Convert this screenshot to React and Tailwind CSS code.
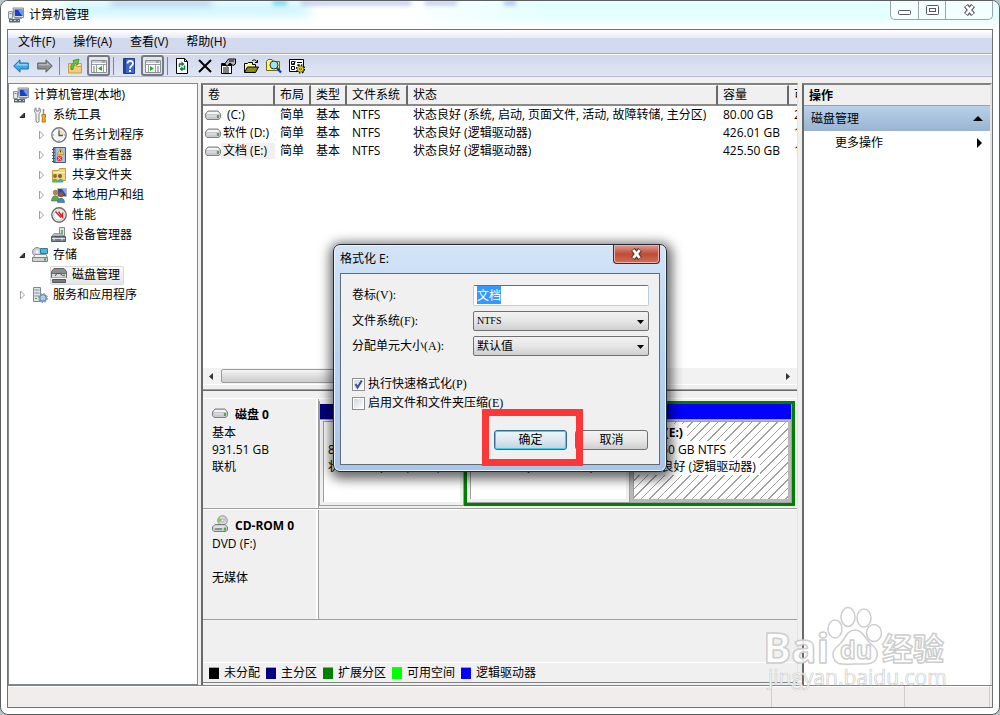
import { useEffect, useRef } from 'react'

const ui = "font-['Open_Sans','Noto_Sans_CJK_SC',sans-serif]"
const song = "font-['Liberation_Serif','Noto_Sans_CJK_SC',serif]"

function Icon({ children, size = 16, className = '' }) {
  return (
    <svg width={size} height={size} viewBox="0 0 16 16" className={`shrink-0 ${className}`} aria-hidden="true">
      {children}
    </svg>
  )
}

const ComputerIcon = () => (
  <Icon>
    <path d="M5 1h10.5v9.5H6z" fill="#d8dadd" stroke="#8b9097" />
    <path d="M6.5 2.5h8v6.5H7z" fill="#1b3fc4" />
    <path d="M10 2.5h4.5V9L12 6z" fill="#6d9cf4" />
    <path d="M.5 4.5h4v7h-4z" fill="#e3e7ea" stroke="#8e969c" />
    <path d="M1.5 6.5h2" stroke="#3bb04a" />
    <path d="M7 11h7v1H6z" fill="#9ba3aa" />
    <path d="M1 12h11v3.5H1z" fill="#5d6b75" />
    <path d="M2 13.5h2m2 0h2m2 0h1" stroke="#c8d4dc" />
  </Icon>
)

const ToolsIcon = () => (
  <Icon>
    <path d="M4 .8C2 1.500 1.500 5 4 6.500V14c0 2 3 2 3 0V6.500c2.500-1.500 2-5 0-5.700V4H4z" fill="#eef0f1" stroke="#7d8489" />
    <path d="M11.500 2v6" stroke="#8a9196" strokeWidth="1.500" />
    <path d="M10 7.500h3.500v2.500l-.5 1 .5 4h-3.500l.5-4-.5-1z" fill="#f3b02a" stroke="#b9780e" />
  </Icon>
)

const ClockIcon = () => (
  <Icon>
    <circle cx="8" cy="8" r="7.2" fill="#f4f4f2" stroke="#777b80" strokeWidth="1.4" />
    <path d="M8 8V2.500A5.500 5.500 0 0 1 13.500 8z" fill="#f7dfae" />
    <path d="M8 3.500V8.500h4" stroke="#4a5c70" strokeWidth="1.3" fill="none" />
    <path d="M8 2v1M8 13v1M2 8h1M13 8h1" stroke="#888" />
  </Icon>
)

const EventIcon = () => (
  <Icon>
    <path d="M2.500.5h12v15h-12z" fill="#7893c0" stroke="#40598a" />
    <path d="M5 1h9v14H5z" fill="#a9c0e6" />
    <path d="M1 2.500h3m-3 3h3m-3 3h3m-3 3h3m-3 3h3" stroke="#445a84" />
    <path d="M9.500 1.500l3.500 6H6z" fill="#ffd633" stroke="#b58b12" strokeWidth=".7" />
    <path d="M9.500 3.500v2" stroke="#333" />
    <circle cx="8.500" cy="11.500" r="2.800" fill="#dd3b3b" />
    <path d="M7.300 10.300l2.400 2.400m0-2.400l-2.400 2.400" stroke="#fff" />
  </Icon>
)

const SharedIcon = () => (
  <Icon>
    <path d="M1.500 3.500h6l1-2h6v12h-13z" fill="#f5d675" stroke="#c49b34" />
    <path d="M2 5.500h12" stroke="#fff0b4" />
    <circle cx="4" cy="9" r="2" fill="#8a6b3a" />
    <circle cx="9" cy="9" r="2" fill="#7c5b31" />
    <path d="M1 15.500c0-5 6-5 6 0z" fill="#6ab04c" />
    <path d="M6.500 15.500c0-5 6-5 6 0z" fill="#4aa6b8" />
  </Icon>
)

const UsersIcon = () => (
  <Icon>
    <path d="M6.500 1.500h9v8h-9z" fill="#2647bd" stroke="#b5bac1" />
    <path d="M11 2h4v6z" fill="#84a8ef" />
    <circle cx="4.500" cy="5.500" r="2.700" fill="#b98447" />
    <circle cx="10" cy="7.500" r="2.600" fill="#8d5c2c" />
    <path d="M.5 14c0-7 7.500-7 7.500 0z" fill="#5da563" stroke="#3d7745" strokeWidth=".6" />
    <path d="M6.500 15.500c0-6 7-6 7 0z" fill="#4f86b9" stroke="#335d8c" strokeWidth=".6" />
  </Icon>
)

const GaugeIcon = () => (
  <Icon>
    <circle cx="8" cy="8" r="7.200" fill="#fbfbfb" stroke="#6c6c6c" strokeWidth="1.400" />
    <circle cx="8" cy="8" r="5.300" fill="none" stroke="#c9c9c9" />
    <path d="M4.500 4.500l5.500 6M7.500 4.500l4 5.500V5.500" fill="none" stroke="#cf1f1f" strokeWidth="1.400" />
  </Icon>
)

const DeviceIcon = () => (
  <Icon>
    <path d="M8.500.5h5v9h-5z" fill="#dfe5e8" stroke="#848c92" />
    <path d="M11 3v4" stroke="#43a047" strokeWidth="1.500" />
    <path d="M3 6.500h7L13 9H1z" fill="#b9c0c5" stroke="#7b848a" strokeWidth=".7" />
    <path d="M.5 9.500h14v5H.5z" fill="#72808a" stroke="#505b63" />
    <path d="M1 11.500h13" stroke="#dbe2e6" />
    <path d="M3 10.500v3m8-3v3" stroke="#e8eef1" />
  </Icon>
)

const StorageIcon = () => (
  <Icon>
    <circle cx="5" cy="5" r="4.500" fill="#c9cfd2" stroke="#899196" />
    <circle cx="5" cy="5" r="1.400" fill="#fff" />
    <path d="M8.500 1.500h7v5h-7z" fill="#4bb7df" stroke="#2c7ea3" />
    <path d="M1.500 10.500L3 7.500h11l1.500 3z" fill="#eff1f2" stroke="#8d9498" />
    <path d="M.5 10.500h15v4H.5z" fill="#cfd3d6" stroke="#7c8387" />
    <path d="M12 12.500h2" stroke="#24b324" strokeWidth="2" />
  </Icon>
)

const DiskStackIcon = () => (
  <Icon>
    <path d="M.5 4.500L3 1.500h10l2.500 3v2H.5z" fill="#8b8f92" stroke="#5c6063" />
    <path d="M.5 6.500h15v4H.5z" fill="#d9dbdc" stroke="#66696b" />
    <path d="M4.500 9c0-3.500 6-3.500 7 0" stroke="#4f5254" fill="none" />
    <path d="M12 8.500h2" stroke="#1fa81f" strokeWidth="1.500" />
    <path d="M1 10.500h14v2H1z" fill="#f4f4f4" />
    <path d="M1.500 12.500h13v3h-13z" fill="#777b7e" stroke="#55585a" />
  </Icon>
)

const ServicesIcon = () => (
  <Icon>
    <path d="M1.500.5h7v14h-7z" fill="#dce2e7" stroke="#7f8991" />
    <path d="M2.500 3h5m-5 3h5m-5 3h5" stroke="#7d96a8" />
    <path d="M3 11.500h2" stroke="#3aa843" />
    <circle cx="11" cy="11" r="3.200" fill="#cfe0ef" stroke="#6b91b4" strokeWidth="1.500" />
    <circle cx="11" cy="11" r="4.500" fill="none" stroke="#6b91b4" strokeDasharray="1.700 1.830" />
    <circle cx="11" cy="11" r="1.200" fill="#fff" stroke="#5d7f9f" strokeWidth=".6" />
  </Icon>
)

function DriveIcon() {
  return (
    <svg width="16" height="10" viewBox="0 0 16 10" className="shrink-0" aria-hidden="true">
      <path d="M.5 4L3 1h10l2.500 3v3.500L14 9.500H2L.5 7.500z" fill="#c7c9cb" stroke="#7e8083" />
      <path d="M1.500 4h13L13 2H3z" fill="#f3f4f4" />
      <path d="M2 6h9" stroke="#e8e8f2" />
      <path d="M13 5v3" stroke="#19a319" strokeWidth="1.500" />
    </svg>
  )
}

function CdIcon() {
  return (
    <svg width="16" height="17" viewBox="0 0 16 17" className="shrink-0" aria-hidden="true">
      <circle cx="10.500" cy="5.500" r="4.800" fill="#d5d8da" stroke="#8e9396" />
      <path d="M10.500 5.500L7 2.500a5 5 0 0 0-.5 5z" fill="#79d54a" />
      <path d="M10.500 5.500l3-4 1.500 4z" fill="#d8b3dc" />
      <circle cx="10.500" cy="5.500" r="1.300" fill="#fff" stroke="#888" strokeWidth=".6" />
      <path d="M.5 12L3 9.500h10l2.500 2.500v3L14 16.500H2L.5 15z" fill="#c9cbcd" stroke="#7a7d80" />
      <path d="M2 12h12" stroke="#f7f7f7" />
      <path d="M3 14h7" stroke="#55585a" />
      <path d="M13 12.500v3" stroke="#19a319" strokeWidth="1.500" />
    </svg>
  )
}

const BackIcon = () => (
  <Icon>
    <path d="M.7 8L7 1.800V5h8.300v6H7v3.200z" fill="#3ba9ea" stroke="#1f6fa8" />
    <path d="M2.500 7.500L6 4v2h8.500v1.500z" fill="#8fd6fa" />
  </Icon>
)
const ForwardIcon = () => (
  <Icon>
    <path d="M15.300 8L9 1.800V5H.7v6H9v3.200z" fill="#8a8c8e" stroke="#606264" />
    <path d="M13.500 7.500L10 4v2H1.500v1.500z" fill="#b5b7b9" />
  </Icon>
)
const UpFolderIcon = () => (
  <Icon>
    <path d="M1.500 5.500h4l1.500 2h7.500v7.500h-13z" fill="#f3cd7c" stroke="#c79c4a" />
    <path d="M9.500 5.500h5v3h-5z" fill="#f8dfa0" stroke="#c79c4a" />
    <path d="M4 11.500c-.5-4 .5-6 3-7L6 2.500l6-1.500-1.500 6-1.500-1.500c-2 .5-2.500 3-3 6z" fill="#5fca37" stroke="#338d1b" strokeWidth=".8" />
  </Icon>
)
const PaneIcon = ({ flip }) => (
  <Icon>
    <path d="M.5 2.500h15v12H.5z" fill="#fdfdfd" stroke="#8b8e91" />
    <path d="M1 3h14v2H1z" fill="#ccd0d4" />
    <path d="M11 4h3" stroke="#77797c" />
    <path d="M1 6.500h14" stroke="#999ca0" />
    {flip ? (
      <>
        <path d="M3.500 7v7M10.500 7v7" stroke="#9a9da0" />
        <path d="M5 8l4 2.500L5 13z" fill="#2fa52f" />
        <path d="M12 9h2m-2 2h2m-2 2h2" stroke="#6f7276" />
      </>
    ) : (
      <>
        <path d="M5.500 7v7M12.500 7v7" stroke="#9a9da0" />
        <path d="M2 9h2m-2 2h2m-2 2h2" stroke="#6f7276" />
        <path d="M11 8l-4 2.500L11 13z" fill="#2fa52f" />
      </>
    )}
  </Icon>
)
const HelpIcon = () => (
  <Icon>
    <path d="M2.500.5h11v15h-11z" fill="#3f68c4" stroke="#203e8c" />
    <path d="M3 1h2v14H3z" fill="#234497" />
    <path d="M6.500 5.500C6.500 2 12 2 12 5.500 12 8 9 7.500 9 10.500" stroke="#fff" strokeWidth="1.800" fill="none" />
    <path d="M8 12h2v2H8z" fill="#fff" />
  </Icon>
)
const RefreshIcon = () => (
  <Icon>
    <path d="M2.500.5h8l3 3v12h-11z" fill="#fff" stroke="#000" />
    <path d="M10.500.5v3h3" fill="none" stroke="#000" />
    <path d="M5.500 9V6H8M10.500 7.500v3.500H8" fill="none" stroke="#08803a" strokeWidth="1.500" />
    <path d="M7.500 3.500L10.500 6l-3 2.500zM8.500 8.500L5.500 11l3 2.500z" fill="#08803a" />
  </Icon>
)
const DeleteIcon = () => (
  <Icon>
    <path d="M2 2l12 12M14 2L2 14" stroke="#000" strokeWidth="2" />
  </Icon>
)
const PropsIcon = () => (
  <Icon>
    <path d="M1.500 5.500h10v10h-10z" fill="#fff" stroke="#000" />
    <path d="M2 6h9v2H2z" fill="#000" />
    <path d="M3 10h6M3 12h6M3 14h6" stroke="#000" />
    <path d="M5 5.500L8.500 1h7v5L13 7.500 10 5 7 8.500z" fill="#b5b5b5" stroke="#000" />
    <path d="M9 3h5" stroke="#000" />
  </Icon>
)
const OpenIcon = () => (
  <Icon>
    <path d="M1.500 14V5.500h3l1-1h4v2h3V9" fill="#fff7a0" stroke="#000" />
    <path d="M1.500 14.500L4.500 9H15.500l-3 5.500z" fill="#8c8a12" stroke="#000" />
    <path d="M9 3c2-2 4-1 5 1m-2 .5h2.500V2" fill="none" stroke="#000" />
  </Icon>
)
const FindIcon = () => (
  <Icon>
    <path d="M.5 3.500L2 1.500h4l1.500 2h6v9H.5z" fill="#fff27a" stroke="#6f6810" />
    <circle cx="8" cy="7" r="4" fill="#8fe9f5" stroke="#333" />
    <path d="M11 10l4 4.500" stroke="#1430a8" strokeWidth="2.200" />
  </Icon>
)
const SettingsIcon = () => (
  <Icon>
    <path d="M.5 1.500h14v12H.5z" fill="#fff" stroke="#000" />
    <path d="M2.500 3.500h3v3h-3zM2.500 8.500h3v3h-3z" fill="#fff" stroke="#000" />
    <path d="M3.500 5l1 1 2-2.500M8 4.500h5M8 7h3" stroke="#000" fill="none" />
    <circle cx="11.500" cy="11" r="4" fill="none" stroke="#000" strokeWidth="1.500" strokeDasharray="1.500 1.640" />
    <circle cx="11.500" cy="11" r="3" fill="#f3e322" stroke="#8a8000" />
    <circle cx="11.500" cy="11" r="1" fill="#fff" stroke="#000" strokeWidth=".6" />
  </Icon>
)

function ToolButton({ label, on, children }) {
  return (
    <button
      aria-label={label}
      className={`flex h-[21px] w-[23px] items-center justify-center rounded-[3px] ${
        on ? 'border-2 border-[#737985] bg-[#e3e5ec]' : ''
      }`}
    >
      {children}
    </button>
  )
}

const Separator = () => <span className="mx-[2px] h-[18px] w-px bg-[#7f848e]" />

const tree = [
  { text: '计算机管理(本地)', level: 0, icon: ComputerIcon },
  { text: '系统工具', level: 1, icon: ToolsIcon, arrow: 'open' },
  { text: '任务计划程序', level: 2, icon: ClockIcon, arrow: 'closed' },
  { text: '事件查看器', level: 2, icon: EventIcon, arrow: 'closed' },
  { text: '共享文件夹', level: 2, icon: SharedIcon, arrow: 'closed' },
  { text: '本地用户和组', level: 2, icon: UsersIcon, arrow: 'closed' },
  { text: '性能', level: 2, icon: GaugeIcon, arrow: 'closed' },
  { text: '设备管理器', level: 2, icon: DeviceIcon },
  { text: '存储', level: 1, icon: StorageIcon, arrow: 'open' },
  { text: '磁盘管理', level: 2, icon: DiskStackIcon, selected: true },
  { text: '服务和应用程序', level: 1, icon: ServicesIcon, arrow: 'closed' },
]

const indent = ['pl-[3px]', 'pl-[8px]', 'pl-[27px]']

function TreeRow({ text, level, icon: RowIcon, arrow, selected }) {
  return (
    <li className={`flex h-5 items-center ${indent[level]}`}>
      {level > 0 && (
        <svg width="10" height="10" viewBox="0 0 10 10" className="mr-[4px] shrink-0" aria-hidden="true">
          {arrow === 'open' && <path d="M7.500 3v4.500H3z" fill="#404040" stroke="#222" />}
          {arrow === 'closed' && <path d="M3.500 1l4 4-4 4z" fill="#fff" stroke="#a0a0a0" />}
        </svg>
      )}
      <span
        className={`flex h-[19px] items-center gap-[5px] rounded-[2px] border pr-[3px] whitespace-nowrap ${
          selected ? 'border-[#d9d9d9] bg-linear-to-b from-[#fafafa] to-[#e6e6e6]' : 'border-transparent'
        }`}
      >
        <RowIcon />
        {text}
      </span>
    </li>
  )
}

const volumes = [
  { name: '(C:)', status: '状态良好 (系统, 启动, 页面文件, 活动, 故障转储, 主分区)', size: '80.00 GB', free: '2' },
  { name: '软件 (D:)', status: '状态良好 (逻辑驱动器)', size: '426.01 GB', free: '1' },
  { name: '文档 (E:)', status: '状态良好 (逻辑驱动器)', size: '425.50 GB', free: '1', selected: true },
]

const th = 'border-r-2 border-b-2 border-r-[#696969] border-b-[#8a8a8a] border-t border-t-white bg-[#f0f0f0] px-[5px] text-left font-normal'

function VolumeTable() {
  return (
    <table className="w-[625px] table-fixed border-separate border-spacing-0 whitespace-nowrap">
      <colgroup>
        <col className="w-[72px]" />
        <col className="w-[36px]" />
        <col className="w-[36px]" />
        <col className="w-[61px]" />
        <col className="w-[310px]" />
        <col className="w-[71px]" />
        <col />
      </colgroup>
      <thead>
        <tr className="h-[21px]">
          {['卷', '布局', '类型', '文件系统', '状态', '容量', '可'].map((h) => (
            <th key={h} className={th}>{h}</th>
          ))}
        </tr>
      </thead>
      <tbody>
        {volumes.map((v) => (
          <tr key={v.name} className="h-[18px]">
            <td>
              <div className="flex items-center pl-[2px]">
                <DriveIcon />
                <span className={`flex-1 ${v.name === '(C:)' ? 'pl-[6px]' : 'pl-[2px]'} ${v.selected ? 'bg-[#f0f0f0]' : ''}`}>
                  {v.name}
                </span>
              </div>
            </td>
            <td className="px-[5px]">简单</td>
            <td className="px-[5px]">基本</td>
            <td className="px-[5px]">NTFS</td>
            <td className="px-[5px]">{v.status}</td>
            <td className="px-[5px]">{v.size}</td>
            <td className="px-[5px]">{v.free}</td>
          </tr>
        ))}
      </tbody>
    </table>
  )
}

function Partition({ name, size, status, bar, hatched }) {
  return (
    <div className="flex min-w-0 flex-1 flex-col">
      <div className={`h-4 border-r border-b border-[#a0a0a0] ${bar}`} />
      <div className={`flex-1 border-r border-b border-[#a0a0a0] p-[3px] pt-px ${hatched ? 'bg-[#b8b8b8]' : 'bg-[#f0f0f0]'}`}>
        <div
          className={`h-full overflow-hidden border-t border-l border-[#a0a0a0] pt-[2px] pl-[4px] leading-[17px] whitespace-pre ${
            hatched
              ? 'bg-[repeating-linear-gradient(135deg,#fff_0px,#fff_5px,#a0a0a0_5px,#a0a0a0_6px)]'
              : 'bg-white'
          }`}
        >
          {[name, size, status].map((line, i) => (
            <p key={line}>
              <span className={`${i === 0 ? 'font-bold' : ''} ${hatched ? 'bg-white pr-1' : ''}`}>{line}</span>
            </p>
          ))}
        </div>
      </div>
    </div>
  )
}

function DiskRow({ icon, title, lines, children }) {
  return (
    <section className="flex h-[111px] border-t border-t-white border-b border-b-[#a0a0a0]">
      <div className="w-[116px] shrink-0 border-r border-r-[#a0a0a0] pt-[6px] pl-[9px] leading-[17px] shadow-[inset_-2px_0_0_#fff]">
        <h2 className="flex h-[19px] items-center gap-[7px] font-bold">
          <span className="pb-[4px]">{icon}</span>
          {title}
        </h2>
        {lines.map((line, i) => (
          <p key={i} className="h-[17px]">{line}</p>
        ))}
      </div>
      {children}
    </section>
  )
}

const legend = [
  { text: '未分配', color: 'bg-black' },
  { text: '主分区', color: 'bg-[#000080]' },
  { text: '扩展分区', color: 'bg-[#008000]' },
  { text: '可用空间', color: 'bg-[#00ff00]' },
  { text: '逻辑驱动器', color: 'bg-[#0000ff]' },
]

const field = 'w-[176px] rounded-[2px] border px-[3px] text-black'

function SelectField({ id, value, textSize = 'text-xs' }) {
  return (
    <div className="relative">
      <select
        id={id}
        defaultValue={value}
        className={`${field} ${textSize} block h-5 appearance-none border-[#707070] bg-linear-to-b from-[#f2f2f2] via-[#e6e6e6] to-[#cfcfcf] leading-none`}
      >
        <option>{value}</option>
      </select>
      <svg width="7" height="4" viewBox="0 0 7 4" className="pointer-events-none absolute top-[9px] right-[5px]" aria-hidden="true">
        <path d="M0 0h7L3.500 4z" fill="#000" />
      </svg>
    </div>
  )
}

function CheckField({ id, label, checked }) {
  return (
    <div className="flex h-[19px] items-center gap-[3px]">
      <span className="relative flex">
        <input
          id={id}
          type="checkbox"
          defaultChecked={checked}
          className="peer size-[13px] appearance-none border border-[#8e8f8f] bg-linear-to-br from-[#d0d5da] to-white shadow-[inset_0_0_0_1px_#fff]"
        />
        <svg viewBox="0 0 13 13" className="pointer-events-none absolute inset-0 hidden size-[13px] peer-checked:block" aria-hidden="true">
          <path d="M3.500 6l2 3.500L9.800 2.500" fill="none" stroke="#3a509c" strokeWidth="2" />
        </svg>
      </span>
      <label htmlFor={id}>{label}</label>
    </div>
  )
}

function CloseGlyph({ stroke, inner }) {
  return (
    <svg width="13" height="12" viewBox="0 0 13 12" aria-hidden="true">
      <path d="M3 1.500l7 9M10 1.500l-7 9" stroke={stroke} strokeWidth="5" />
      <path d="M3.300 2l6.400 8M9.700 2L3.300 10" stroke={inner} strokeWidth="2.800" />
    </svg>
  )
}

function FormatDialog() {
  const nameRef = useRef(null)

  useEffect(() => {
    nameRef.current.focus()
    nameRef.current.select()
  }, [])

  return (
    <div
      role="dialog"
      aria-label="格式化 E:"
      className="w-[334px] rounded-[7px] border border-[#242a33] bg-linear-to-b from-[#d3e4f6] via-[#b5d3f2] to-[#a9c6e6] px-[6px] pb-[6px] shadow-[inset_0_0_0_1px_#e8f3fd,1px_3px_12px_4px_rgba(0,0,0,0.6)]"
    >
      <header className="flex h-7 items-start justify-between">
        <h1 className="pt-[5px] leading-[17px]">格式化 E:</h1>
        <button
          aria-label="关闭"
          className="flex h-[19px] w-[47px] items-center justify-center rounded-b-[4px] border border-t-0 border-[#5c1f1c] bg-linear-to-b from-[#dd9c90] via-[#c04a35] to-[#d07058] shadow-[inset_0_0_0_1px_#e9b5aa]"
        >
          <CloseGlyph stroke="#54332f" inner="#fff" />
        </button>
      </header>

      <div className={`border border-[#5f6c7b] bg-[#f0f0f0] pt-[11px] pr-[10px] pb-[14px] pl-[11px] leading-4 ${song}`}>
        <div className="grid grid-cols-[1fr_auto] items-center gap-y-[5px]">
          <label htmlFor="volume">卷标(V):</label>
          <input
            id="volume"
            ref={nameRef}
            defaultValue="文档"
            className={`${field} h-[21px] border-[#b5cfe7] border-t-[#3d7bad] bg-white text-xs leading-4 outline-none selection:bg-[#3399ff] selection:text-white`}
          />
          <label htmlFor="fs">文件系统(F):</label>
          <SelectField id="fs" value="NTFS" textSize="text-[10px]" />
          <label htmlFor="unit">分配单元大小(A):</label>
          <SelectField id="unit" value="默认值" />
        </div>

        <div className="mt-[19px]">
          <CheckField id="quick" label="执行快速格式化(P)" checked />
          <CheckField id="compress" label="启用文件和文件夹压缩(E)" />
        </div>

        <div className="mt-[17px] flex justify-end gap-2 pr-px">
          <div className="relative">
            <button className="block h-5 w-[73px] rounded-[3px] border border-[#2f6f93] bg-linear-to-b from-[#eef5f9] via-[#dce9f0] to-[#bfd3df] leading-none shadow-[inset_0_0_0_1px_#3fcdf5]">
              确定
            </button>
            {/* highlight frame around the confirm button */}
            <span className="pointer-events-none absolute -top-[21px] -right-4 -bottom-4 -left-3 z-10 border-[7px] border-[#fb3838]" />
          </div>
          <button className="h-5 w-[73px] rounded-[3px] border border-[#707070] bg-linear-to-b from-[#f3f3f3] via-[#e8e8e8] to-[#cecece] leading-none">
            取消
          </button>
        </div>
      </div>
    </div>
  )
}

function Watermark() {
  return (
    <svg width="184" height="92" viewBox="0 0 184 92" className="pointer-events-none absolute right-[50px] bottom-[18px] z-30" aria-hidden="true">
      <g fill="#fff" fillOpacity=".85" stroke="#cdcdcd" strokeWidth="1.500" strokeLinejoin="round">
        <ellipse cx="69" cy="24" rx="7" ry="9" />
        <ellipse cx="82" cy="12" rx="7" ry="9.500" />
        <ellipse cx="98" cy="13" rx="7" ry="9" />
        <ellipse cx="108" cy="28" rx="7.500" ry="8.500" />
        <path d="M89 25c8 0 10 9 16 14s8 9 5 15-11 5-21 5-18 2-21-5 1-11 6-15 6-14 15-14z" />
        <g className="font-['Open_Sans','Noto_Sans_CJK_SC',sans-serif] font-bold">
          <text x="-3" y="58" fontSize="42">Bai</text>
          <text x="74" y="54" fontSize="25">du</text>
          <text x="116" y="55" fontSize="31">经验</text>
        </g>
      </g>
      <text x="2" y="80" fontSize="21" fill="#fff" stroke="#cdcdcd" strokeWidth=".7" className="font-['Open_Sans',sans-serif]">jingyan.baidu.com</text>
    </svg>
  )
}

export default function App() {
  return (
    <div className={`relative flex h-screen flex-col overflow-hidden bg-[#b9c4c8] text-xs text-black ${ui}`}>
      <div className="relative flex flex-1 flex-col overflow-hidden rounded-[8px] border border-[#5b5f61] bg-white px-[6px] pb-[6px]">
        {/* Title bar */}
        <div className="pointer-events-none absolute inset-x-0 top-0 h-7 bg-linear-to-r from-white from-40% via-[#e3ffff] via-55% to-[#e3ffff]">
          <div className="absolute top-0 left-[60px] h-4 w-[250px] rounded-full bg-[#cdf6ff] blur-[6px]" />
          <div className="absolute top-0 left-[110px] h-1 w-[100px] bg-[#a9bde8] blur-[3px]" />
          <div className="absolute top-0 left-[272px] h-1 w-[14px] bg-[#63cdf2] blur-[2px]" />
          <div className="absolute top-0 left-[300px] h-1 w-[110px] bg-[#b9c3ee] blur-[2px]" />
          <div className="absolute top-0 left-[424px] h-1 w-8 bg-[#b9c3ee] blur-[2px]" />
          <div className="absolute top-0 left-[503px] h-1 w-3 bg-[#9fb9ee] blur-[2px]" />
          <div className="absolute inset-x-0 bottom-0 h-3 bg-linear-to-b from-white/0 to-white" />
        </div>
        <header className="relative flex h-7 items-start justify-between pl-px">
          <div className="flex h-7 items-center gap-[5px]">
            <ComputerIcon />
            计算机管理
          </div>
          <div className="flex h-[19px] w-[103px] overflow-hidden rounded-b-[5px] border border-t-0 border-[#9aa3a6] bg-white/60">
            <button aria-label="最小化" className="flex w-7 items-center justify-center border-r border-[#9aa3a6] pt-1">
              <svg width="13" height="5" viewBox="0 0 13 5" aria-hidden="true">
                <rect x=".5" y=".5" width="12" height="4" rx="1" fill="#fff" stroke="#535666" />
              </svg>
            </button>
            <button aria-label="最大化" className="flex w-[27px] items-center justify-center border-r border-[#9aa3a6]">
              <svg width="13" height="11" viewBox="0 0 13 11" aria-hidden="true">
                <rect x=".5" y=".5" width="12" height="9" rx="1" fill="#fff" stroke="#535666" />
                <rect x="3.500" y="3.500" width="6" height="3" fill="#fff" stroke="#535666" />
              </svg>
            </button>
            <button aria-label="关闭" className="flex flex-1 items-center justify-center">
              <CloseGlyph stroke="#535666" inner="#fff" />
            </button>
          </div>
        </header>

        <div className="relative flex min-h-0 flex-1 flex-col border border-[#6e7375] bg-[#f0f0f0]">
          {/* Menu */}
          <nav className="flex h-6 shrink-0 items-center gap-[18px] border-b border-[#a9adb8] bg-linear-to-b from-white via-[#e6eaf4] via-35% to-[#d4daee] to-36% pl-[10px]">
            {['文件(F)', '操作(A)', '查看(V)', '帮助(H)'].map((item) => (
              <button key={item}>{item}</button>
            ))}
          </nav>

          {/* Toolbar */}
          <div className="flex h-[23px] shrink-0 items-center border-t border-b border-t-white border-b-[#b4bccd] bg-linear-to-b from-[#d2d8ec] to-[#e0e6f4] pl-px">
            <div className="flex items-center gap-px">
              <ToolButton label="后退"><BackIcon /></ToolButton>
              <ToolButton label="前进"><ForwardIcon /></ToolButton>
              <Separator />
              <ToolButton label="上一级"><UpFolderIcon /></ToolButton>
              <ToolButton label="显示控制台树" on><PaneIcon /></ToolButton>
              <Separator />
              <ToolButton label="帮助"><HelpIcon /></ToolButton>
              <ToolButton label="显示操作窗格" on><PaneIcon flip /></ToolButton>
              <Separator />
            </div>
            <div className="flex items-center">
              <ToolButton label="刷新"><RefreshIcon /></ToolButton>
              <ToolButton label="删除"><DeleteIcon /></ToolButton>
              <ToolButton label="属性"><PropsIcon /></ToolButton>
              <ToolButton label="打开"><OpenIcon /></ToolButton>
              <ToolButton label="查找"><FindIcon /></ToolButton>
              <ToolButton label="设置"><SettingsIcon /></ToolButton>
            </div>
          </div>

          <main className="flex min-h-0 flex-1 pt-[6px]">
            {/* Console tree */}
            <aside className="w-[190px] shrink-0 border border-[#828790] bg-white pt-px">
              <ul>
                {tree.map((row) => (
                  <TreeRow key={row.text} {...row} />
                ))}
              </ul>
            </aside>

            {/* Volumes and disk map */}
            <div className="mr-1 ml-[3px] flex min-w-0 flex-1 flex-col border-t-2 border-r border-l-2 border-[#696969] border-t-[#828282] border-r-[#e3e3e3]">
              <div className="flex min-h-0 flex-1 flex-col overflow-hidden bg-white">
                <VolumeTable />
              </div>
              <div className="flex h-4 shrink-0 items-center bg-[#f2f2f2] px-[6px]">
                <svg width="5" height="7" viewBox="0 0 5 7" aria-hidden="true"><path d="M4 0v7L0 3.500z" fill="#333" /></svg>
                <div className="ml-[7px] h-[14px] w-3/5 rounded-[2px] border border-[#9b9b9b] bg-linear-to-b from-[#f5f5f5] via-[#dedede] to-[#cdcdcd]" />
                <svg width="5" height="7" viewBox="0 0 5 7" className="ml-auto" aria-hidden="true"><path d="M0 0v7l4-3.500z" fill="#333" /></svg>
              </div>
              <div className="h-[7px] shrink-0 border-t border-b border-t-white border-b-[#696969] shadow-[inset_0_-1px_0_#a0a0a0]" />

              <div className="shrink-0 pt-[7px]">
                <DiskRow icon={<DriveIcon />} title="磁盘 0" lines={['基本', '931.51 GB', '联机']}>
                  <div className="flex min-w-0 flex-1 pt-[2px] pr-[2px] pb-[2px]">
                    <div className="flex w-[145px] shrink-0 border-l border-[#a0a0a0] pt-[3px]">
                      <Partition name="  (C:)" size="80.00 GB NTFS" status="状态良好 (系统, 启动, 页面文件, 活动, 故障转储, 主分区)" bar="bg-[#000080]" />
                    </div>
                    <div className="flex min-w-0 flex-1 border-[3px] border-[#008000]">
                      <Partition name="软件 (D:)" size="426.01 GB NTFS" status="状态良好 (逻辑驱动器)" bar="bg-[#0000ff]" />
                      <Partition name="文档 (E:)" size="425.50 GB NTFS" status="状态良好 (逻辑驱动器)" bar="bg-[#0000ff]" hatched />
                    </div>
                  </div>
                </DiskRow>
                <DiskRow icon={<CdIcon />} title="CD-ROM 0" lines={['DVD (F:)', '', '无媒体']} />
              </div>

              <ul className="mt-[42px] mb-[2px] flex h-[21px] shrink-0 items-center gap-[6px] border-t border-b border-t-white border-b-[#828282] pl-[6px]">
                {legend.map((item) => (
                  <li key={item.text} className="flex items-center gap-[5px]">
                    <span className={`h-3 w-[10px] border-t border-[#a0a0a0] ${item.color}`} />
                    {item.text}
                  </li>
                ))}
              </ul>
            </div>

            {/* Actions */}
            <aside className="w-[190px] shrink-0 border-t-2 border-r-2 border-l-2 border-[#696969] border-t-[#828282] border-r-[#e3e3e3] bg-white">
              <h2 className="h-[21px] border-b border-[#a0a0a0] bg-[#f0f0f0] pl-[5px] leading-[21px] font-bold">操作</h2>
              <button className="flex h-[25px] w-full items-center justify-between bg-linear-to-b from-[#b9d1ea] to-[#99b4d1] pr-[7px] pl-[7px]">
                磁盘管理
                <svg width="10" height="5" viewBox="0 0 10 5" aria-hidden="true"><path d="M0 5h10L5 0z" fill="#000" /></svg>
              </button>
              <button className="flex h-6 w-full items-center justify-between pr-[8px] pl-[31px]">
                更多操作
                <svg width="5" height="10" viewBox="0 0 5 10" aria-hidden="true"><path d="M0 0v10l5-5z" fill="#000" /></svg>
              </button>
            </aside>
          </main>

          {/* Status bar */}
          <footer className="flex h-[22px] shrink-0 border-t border-[#828282] bg-[#f0edec] pr-[2px] shadow-[inset_0_1px_0_#fff]">
            <div className="flex-1 border-r border-[#d0cdcc]" />
            <div className="w-[133px] border-r border-[#d0cdcc]" />
            <div className="w-[85px] border-r border-[#d0cdcc]" />
          </footer>
        </div>
      </div>

      <div className="pointer-events-none absolute inset-0 z-20 grid place-items-center">
        <FormatDialog />
      </div>
      <Watermark />
    </div>
  )
}
